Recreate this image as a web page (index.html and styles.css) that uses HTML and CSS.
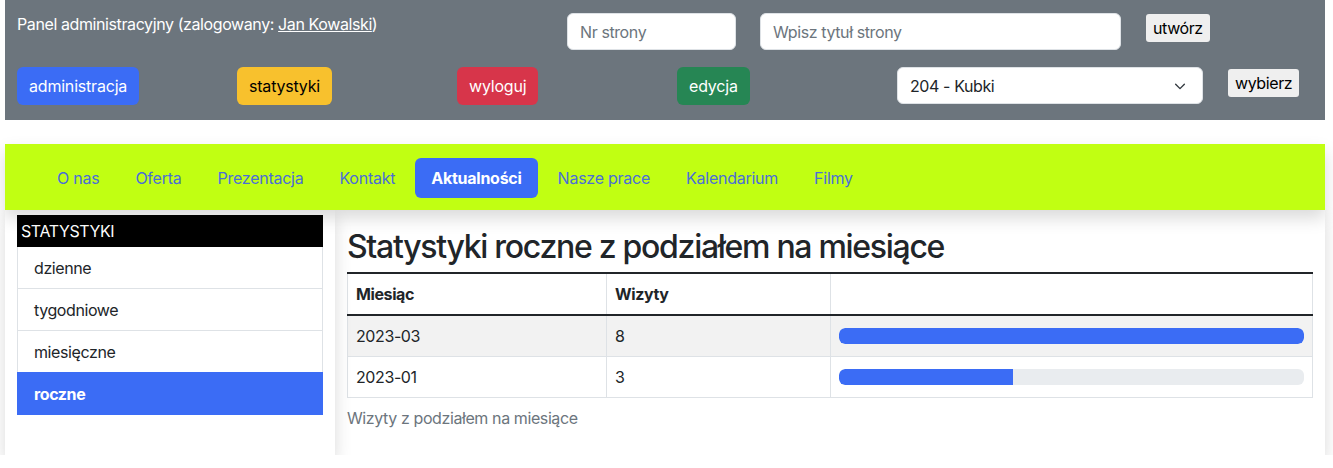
FILE: index.html
```html
<!DOCTYPE html>
<html lang="pl">
<head>
<meta charset="utf-8">
<title>Statystyki</title>
<link rel="stylesheet" href="styles.css">
</head>
<body>
<div class="page">
  <header class="admin">
    <div class="admin-row row-top">
      <div class="col-5 panel-title">Panel administracyjny (zalogowany: <a href="#" class="user">Jan Kowalski</a>)</div>
      <div class="col-7 create-form">
        <input class="field field-nr" type="text" placeholder="Nr strony">
        <input class="field field-title" type="text" placeholder="Wpisz tytuł strony">
        <button class="plain-btn btn-create">utwórz</button>
      </div>
    </div>
    <div class="admin-row row-bottom">
      <div class="col-2"><a href="#" class="btn btn-blue">administracja</a></div>
      <div class="col-2"><a href="#" class="btn btn-yellow">statystyki</a></div>
      <div class="col-2"><a href="#" class="btn btn-red">wyloguj</a></div>
      <div class="col-2"><a href="#" class="btn btn-green">edycja</a></div>
      <div class="col-3">
        <div class="select-wrap">
          <select class="page-select"><option>204 - Kubki</option></select>
          <svg class="chev" width="14" height="14" viewBox="0 0 16 16"><path d="M3 6l5 5 5-5" fill="none" stroke="#343a40" stroke-width="1.6" stroke-linecap="round" stroke-linejoin="round"/></svg>
        </div>
      </div>
      <div class="col-1"><button class="plain-btn btn-pick">wybierz</button></div>
    </div>
  </header>

  <nav class="menu">
    <a href="#" class="pill">O nas</a>
    <a href="#" class="pill">Oferta</a>
    <a href="#" class="pill">Prezentacja</a>
    <a href="#" class="pill">Kontakt</a>
    <a href="#" class="pill active">Aktualności</a>
    <a href="#" class="pill">Nasze prace</a>
    <a href="#" class="pill">Kalendarium</a>
    <a href="#" class="pill">Filmy</a>
  </nav>

  <div class="content">
    <aside class="card side">
      <div class="side-head">STATYSTYKI</div>
      <a href="#" class="side-item">dzienne</a>
      <a href="#" class="side-item">tygodniowe</a>
      <a href="#" class="side-item">miesięczne</a>
      <a href="#" class="side-item current">roczne</a>
    </aside>
    <main class="card main">
      <h2 class="title">Statystyki roczne z podziałem na miesiące</h2>
      <table class="stats">
        <caption>Wizyty z podziałem na miesiące</caption>
        <thead>
          <tr><th class="c1">Miesiąc</th><th class="c2">Wizyty</th><th class="c3"></th></tr>
        </thead>
        <tbody>
          <tr class="odd"><td>2023-03</td><td>8</td><td><div class="progress"><div class="bar" style="width:100%"></div></div></td></tr>
          <tr><td>2023-01</td><td>3</td><td><div class="progress"><div class="bar" style="width:37.5%"></div></div></td></tr>
        </tbody>
      </table>
    </main>
  </div>
</div>
</body>
</html>
```
FILE: styles.css
```css
* { box-sizing: border-box; }
html, body { margin: 0; padding: 0; background: #fff; }
body {
  font-family: "Inter", "Roboto", "Liberation Sans", sans-serif;
  font-size: 16px;
  line-height: 24px;
  color: #212529;
  letter-spacing: -0.4px;
}
.page { width: 1320px; margin-left: 5px; }

/* admin header */
.admin { background: #6c757d; height: 120px; padding-top: 13px; }
.admin-row { display: flex; }
.row-top { height: 54px; }
.col-1, .col-2, .col-3, .col-5, .col-7 { padding: 0 12px; }
.col-1 { width: 110px; }
.col-2 { width: 220px; }
.col-3 { width: 330px; }
.col-5 { width: 550px; }
.col-7 { width: 770px; }
.panel-title { color: #fff; line-height: 22px; }
.user { color: #fff; text-decoration: underline; }
.create-form { display: flex; align-items: flex-start; }
.field {
  height: 37px;
  border: 1px solid #dee2e6;
  border-radius: 6px;
  background: #fff;
  padding: 6px 12px;
  font: inherit;
  letter-spacing: inherit;
  color: #212529;
}
.field::placeholder { color: #6c757d; }
.field-nr { width: 169px; margin-right: 24px; }
.field-title { width: 361px; margin-right: 25px; }
.plain-btn {
  font: inherit;
  letter-spacing: inherit;
  background: #efefef;
  color: #000;
  border: none;
  border-radius: 3px;
  padding: 2px 7px;
  height: 28px;
  line-height: 24px;
}
.btn-create { margin-top: 1px; }
.btn-pick { margin-top: 2px; margin-left: 1px; }

.btn {
  display: inline-block;
  height: 38px;
  padding: 7px 12px;
  border-radius: 6px;
  text-decoration: none;
  color: #fff;
  line-height: 24px;
  letter-spacing: -0.2px;
}
.btn-blue { background: #3b6cf5; }
.btn-yellow { background: #f8c12d; color: #000; }
.btn-red { background: #d7354a; }
.btn-green { background: #268654; }

.select-wrap { position: relative; width: 306px; }
.page-select {
  -webkit-appearance: none;
  appearance: none;
  width: 306px;
  height: 37px;
  border: 1px solid #dee2e6;
  border-radius: 6px;
  background: #fff;
  padding: 6px 36px 6px 12px;
  font: inherit;
  letter-spacing: inherit;
  color: #212529;
}
.chev { position: absolute; right: 16px; top: 12px; }

/* navigation */
.menu {
  margin-top: 24px;
  background: #c1ff12;
  height: 66px;
  padding: 14px 0 0 36px;
  display: flex;
  gap: 4px;
  box-shadow: 0 8px 16px rgba(0,0,0,0.15);
  position: relative;
  z-index: 2;
}
.pill {
  display: block;
  height: 40px;
  padding: 8px 16px;
  color: #4a6ed8;
  text-decoration: none;
  border-radius: 6px;
  letter-spacing: -0.25px;
}
.pill.active { background: #3b6cf5; color: #fff; font-weight: 700; }

/* content */
.content { display: flex; }
.card { background: #fff; box-shadow: 0 8px 16px rgba(0,0,0,0.15); height: 245px; }
.side { width: 330px; padding: 5px 12px 0; position: relative; z-index: 1; }
.main { width: 990px; padding: 18px 12px 0; }
.side-head { background: #000; color: #fff; padding: 4px 4px; height: 32px; }
.side-item {
  display: block;
  height: 42px;
  padding: 9px 16px;
  border: 1px solid #dee2e6;
  border-top: none;
  color: #212529;
  text-decoration: none;
}
.side-item + .side-item { border-top: 1px solid #dee2e6; margin-top: -1px; height: 43px; }
.side-item.current { background: #3b6cf5; color: #fff; font-weight: 700; border-color: #3b6cf5; }

.title {
  margin: 0 0 6px;
  font-size: 32px;
  line-height: 38px;
  font-weight: 500;
  letter-spacing: -1.3px;
}
.stats {
  width: 966px;
  border-collapse: collapse;
  caption-side: bottom;
}
.stats caption { text-align: left; color: #6c757d; padding: 8px 0; }
.stats th, .stats td {
  border: 1px solid #dee2e6;
  padding: 8px;
  text-align: left;
  height: 41px;
}
.stats thead th { border-top: 2px solid #212529; border-bottom: 2px solid #212529; font-weight: 700; height: 42px; }
.stats .c1 { width: 259px; }
.stats .c2 { width: 224px; }
.stats tr.odd td { background: #f2f2f2; }
.progress { height: 16px; background: #e9ecef; border-radius: 6px; overflow: hidden; }
.bar { height: 16px; background: #3b6cf5; border-radius: 6px 0 0 6px; }
.odd .bar { border-radius: 6px; }
```
